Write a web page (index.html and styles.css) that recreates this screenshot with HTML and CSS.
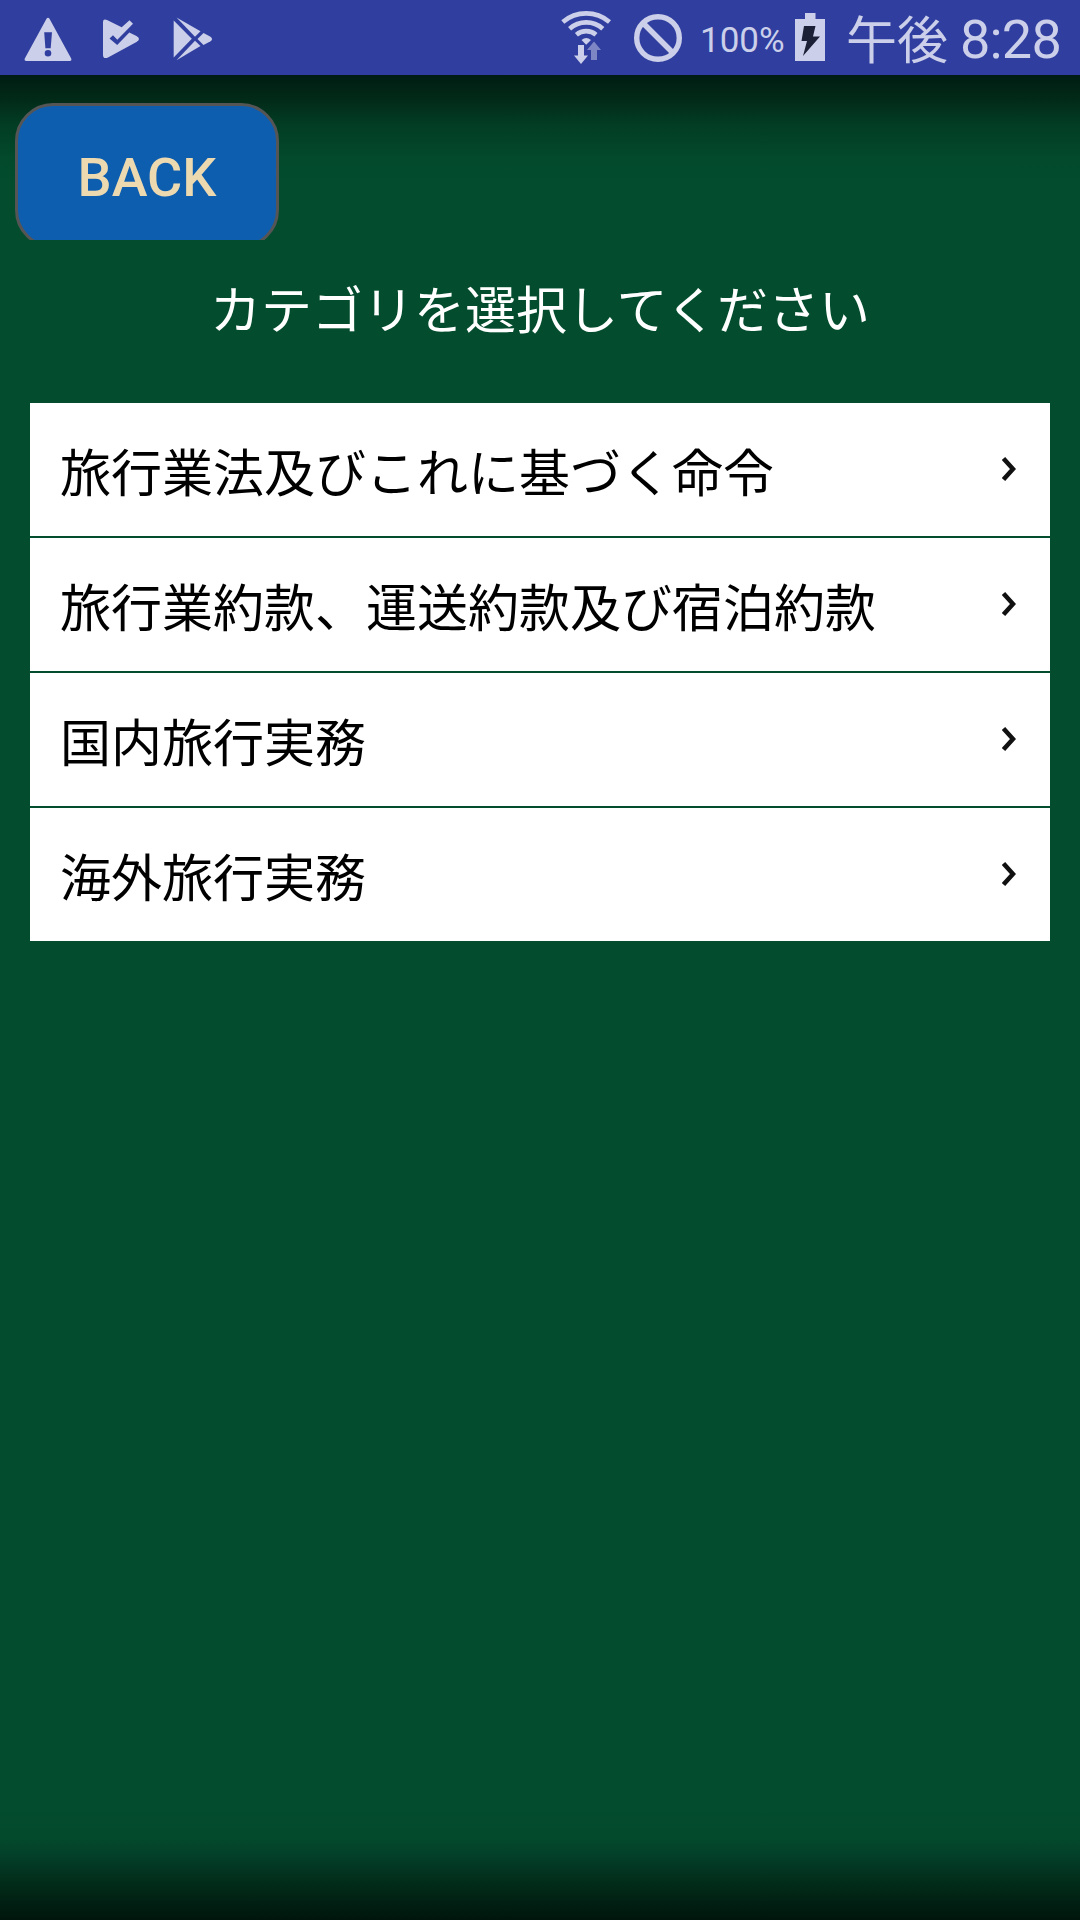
FILE: index.html
```html
<!DOCTYPE html>
<html lang="ja">
<head>
  <meta charset="UTF-8">
  <meta name="viewport" content="width=device-width, initial-scale=1.0">
  <title>カテゴリ選択</title>
  <link rel="stylesheet" href="styles.css">
</head>
<body>
  <div class="statusbar">
    <svg class="notifications" width="240" height="75" viewBox="0 0 240 75">
      <path class="icon-fill" fill-rule="evenodd" d="M46.5 18.8Q48 16.8 49.5 18.8L71.2 58.5Q72 61 69.5 61H26.5Q24 61 24.8 58.5ZM44.2 32.3L45.4 48.3H50.7L52 32.3ZM48 50A3.3 3.3 0 1 0 48 56.6A3.3 3.3 0 1 0 48 50Z"/>
      <path class="icon-fill" d="M103 22Q103 18.5 107 20L121.7 27.2L129.5 20.2L133 23.7L117.3 39.8L113 35.2L109.5 38.6L117.2 45L129.3 32.6L136.5 36Q141.5 39 136.5 42L108 57.5Q103 59.5 103 55Z"/>
      <path class="icon-fill" d="M173.7 20.5L191.8 38.8L173.7 57.5Z"/>
      <path class="icon-fill" d="M176.5 17.5L200.5 31.3L195 36.8Z"/>
      <path class="icon-fill" d="M176.5 60.3L200.5 46L195 40.8Z"/>
      <path class="icon-fill" d="M203.5 33L210.5 36.7Q213.7 39 210.5 41.2L203.5 45L197.5 38.9Z"/>
    </svg>
    <div class="system">
      <svg width="150" height="75" viewBox="560 0 150 75">
        <g class="icon-line">
          <path d="M562.8 22A36 36 0 0 1 609.5 22" stroke-width="4.6"/>
          <path d="M569.6 28.7A25 25 0 0 1 602.8 28.7" stroke-width="4.6"/>
          <path d="M576.4 34.8A15 15 0 0 1 596 34.8" stroke-width="4.6"/>
          <circle cx="658" cy="38" r="21.3" stroke-width="5.4"/>
          <path d="M643 23L673 53" stroke-width="5.4"/>
        </g>
        <path class="icon-fill" d="M581.5 40Q586.2 36 591 40L586.2 44.8Z"/>
        <path class="icon-fill" d="M578 45H584V55.5H588L581 64L574 55.5H578Z"/>
        <path class="icon-fill dim" d="M591 60H597V50H601L594 41.5L587 50H591Z"/>
      </svg>
      <span class="percent">100%</span>
      <svg class="battery" width="30" height="75" viewBox="795 0 30 75">
        <path class="icon-fill" d="M805 13H815.5V19H825V61H795V19H805Z"/>
        <path class="bolt" d="M804 26H815.5L813 36.5H820L803 56L807 41H801.5Z"/>
      </svg>
      <span class="ampm">午後</span>
      <span class="clock">8:28</span>
    </div>
  </div>

  <div class="content">
    <div class="toolbar">
      <button class="back">BACK</button>
    </div>
    <h1 class="title">カテゴリを選択してください</h1>
    <ul class="list">
      <li class="item">
        <span>旅行業法及びこれに基づく命令</span>
        <svg class="arrow" width="14" height="24" viewBox="0 0 14 24"><path d="M1.5 1.5L11 12L1.5 22.5"/></svg>
      </li>
      <li class="item">
        <span>旅行業約款、運送約款及び宿泊約款</span>
        <svg class="arrow" width="14" height="24" viewBox="0 0 14 24"><path d="M1.5 1.5L11 12L1.5 22.5"/></svg>
      </li>
      <li class="item">
        <span>国内旅行実務</span>
        <svg class="arrow" width="14" height="24" viewBox="0 0 14 24"><path d="M1.5 1.5L11 12L1.5 22.5"/></svg>
      </li>
      <li class="item">
        <span>海外旅行実務</span>
        <svg class="arrow" width="14" height="24" viewBox="0 0 14 24"><path d="M1.5 1.5L11 12L1.5 22.5"/></svg>
      </li>
    </ul>
  </div>
</body>
</html>
```
FILE: styles.css
```css
* {
  box-sizing: border-box;
}

body {
  margin: 0;
  height: 1920px;
  overflow: hidden;
  display: flex;
  flex-direction: column;
  font-family: Roboto, "Noto Sans CJK JP", sans-serif;
}

/* status bar */
.statusbar {
  height: 75px;
  flex: none;
  display: flex;
  justify-content: space-between;
  background: #303f9f;
  color: #cbcfea;
}
.system {
  display: flex;
  align-items: center;
  height: 75px;
  padding-right: 18px;
  white-space: nowrap;
}
.icon-fill {
  fill: #cbcfea;
}
.icon-line {
  fill: none;
  stroke: #cbcfea;
}
.dim {
  opacity: 0.5;
}
.bolt {
  fill: #1b2036;
}
.percent {
  width: 85px;
  margin-left: -10px;
  padding-top: 7px;
  font-size: 35px;
  font-weight: 400;
  line-height: 42px;
}
.battery {
  margin-left: 10px;
}
.ampm {
  width: 102px;
  margin-left: 21px;
  font-family: "Noto Sans CJK JP", sans-serif;
  font-size: 51px;
  line-height: 73px;
}
.clock {
  width: 102px;
  margin-left: 12px;
  padding-top: 5px;
  font-size: 54px;
  font-weight: 400;
  letter-spacing: -0.8px;
  line-height: 72px;
}

/* page */
.content {
  flex: 1;
  background: linear-gradient(#001c12 0, #022a18 24px, #023d24 50px, #034a2c 85px, #034d2e 120px, #034d2e 1710px, #034a2c 1762px, #03402a 1780px, #022c1a 1808px, #00150c 1845px);
}
.toolbar {
  height: 165px;
  padding: 28px 15px 0;
  overflow: hidden;
}
.back {
  display: block;
  width: 264px;
  height: 145px;
  padding: 4px 0 0;
  border: 3px solid #555;
  border-radius: 38px;
  background: #0e5eb0;
  color: #ecd9b0;
  font-family: Roboto, sans-serif;
  font-size: 54px;
  font-weight: 500;
}
.title {
  height: 163px;
  margin: 0;
  padding-top: 29px;
  color: #fff;
  font-family: "Noto Sans CJK JP", sans-serif;
  font-size: 51px;
  font-weight: 400;
  line-height: 76px;
  text-align: center;
}
.list {
  display: grid;
  gap: 2px;
  margin: 0 30px;
  padding: 0;
  list-style: none;
}
.item {
  display: flex;
  justify-content: space-between;
  align-items: center;
  height: 133px;
  padding: 0 34px 0 30px;
  background: #fff;
  color: #000;
  font-family: "Noto Sans CJK JP", sans-serif;
  font-size: 51px;
}
.arrow {
  margin-bottom: 2px;
  fill: none;
  stroke: #111;
  stroke-width: 4.5;
}
```
